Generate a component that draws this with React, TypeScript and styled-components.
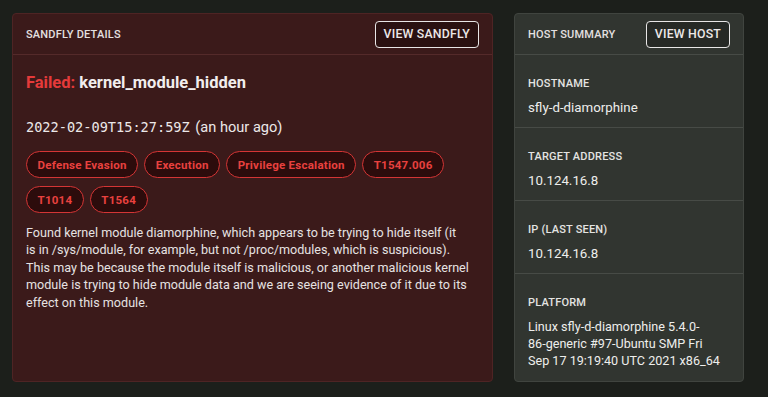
import React from "react";
import styled, { createGlobalStyle } from "styled-components";

const Global = createGlobalStyle`
  html, body { margin: 0; padding: 0; background: #1c1f1b; }
  body { font-family: Roboto, "Liberation Sans", sans-serif; color: #ece8e8; }
  * { box-sizing: border-box; }
`;

const Page = styled.div`
  display: flex;
  gap: 21px;
  padding: 13px 24px 0 12px;
  height: 397px;
`;

const Card = styled.section<{ $tone: "red" | "grey" }>`
  display: flex;
  flex-direction: column;
  height: 369px;
  border-radius: 4px;
  border: 1px solid ${(p) => (p.$tone === "red" ? "#4e2424" : "#40443f")};
  background: ${(p) => (p.$tone === "red" ? "#3b1a1a" : "#313530")};
  overflow: hidden;
`;

const LeftCard = styled(Card)`
  flex: 1;
`;

const RightCard = styled(Card)`
  width: 230px;
  flex: none;
`;

const Header = styled.header<{ $tone: "red" | "grey" }>`
  display: flex;
  align-items: center;
  justify-content: space-between;
  height: 41px;
  padding: 0 13px 0 13px;
  border-bottom: 1px solid ${(p) => (p.$tone === "red" ? "#542a2a" : "#474b46")};
  flex: none;
`;

const HeaderTitle = styled.h2`
  margin: 0;
  font-size: 11px;
  font-weight: 500;
  letter-spacing: 0.2px;
  color: #e4e0e0;
  text-transform: uppercase;
`;

const Button = styled.button<{ $tone: "red" | "grey" }>`
  height: 27px;
  padding: 0 8px;
  border: 1.5px solid #e8e6e6;
  border-radius: 4px;
  background: ${(p) => (p.$tone === "red" ? "#2a1111" : "#262925")};
  color: #ece8e8;
  font-family: Roboto, "Liberation Sans", sans-serif;
  font-size: 12.3px;
  font-weight: 500;
  letter-spacing: 0.2px;
  text-transform: uppercase;
  cursor: pointer;
`;

const Body = styled.div`
  display: flex;
  flex-direction: column;
  padding: 17px 9px 0 13px;
`;

const Title = styled.h1`
  margin: 0;
  font-size: 16.5px;
  line-height: 22px;
  font-weight: 700;
  color: #f2eeee;
`;

const Failed = styled.span`
  color: #e53a3a;
`;

const Timestamp = styled.div`
  margin-top: 23px;
  font-size: 14.6px;
  line-height: 20px;
  color: #ece8e8;
`;

const Mono = styled.span`
  font-family: "DejaVu Sans Mono", "Liberation Mono", monospace;
  font-size: 13.6px;
  margin-right: 2px;
`;

const Tags = styled.div`
  display: flex;
  flex-wrap: wrap;
  gap: 8px 6px;
  margin-top: 14px;
`;

const Tag = styled.span`
  display: inline-flex;
  align-items: center;
  height: 27px;
  padding: 0 10.5px;
  border: 1.6px solid #d43535;
  border-radius: 14px;
  background: #2c0c0c;
  color: #e8413f;
  font-size: 11.5px;
  font-weight: 700;
  letter-spacing: 0.25px;
`;

const Description = styled.p`
  margin: 11px 0 0 0;
  font-size: 12.6px;
  line-height: 17.4px;
  color: #e6e2e2;
`;

const Section = styled.div<{ $last?: boolean }>`
  padding: 22px 12px 0 13px;
  height: ${(p) => (p.$last ? "auto" : "73px")};
  border-bottom: ${(p) => (p.$last ? "none" : "1px solid #474b46")};
  flex: none;
`;

const Label = styled.div`
  font-size: 11px;
  line-height: 14px;
  font-weight: 500;
  letter-spacing: 0.2px;
  color: #e4e4e2;
  text-transform: uppercase;
`;

const Value = styled.div<{ $small?: boolean }>`
  margin-top: 8px;
  font-size: ${(p) => (p.$small ? "12.6px" : "13.3px")};
  line-height: 17px;
  color: #eeeeec;
`;

const NoWrap = styled.span`
  white-space: nowrap;
`;

const tags = [
  "Defense Evasion",
  "Execution",
  "Privilege Escalation",
  "T1547.006",
  "T1014",
  "T1564",
];

const descriptionLines = [
  "Found kernel module diamorphine, which appears to be trying to hide itself (it",
  "is in /sys/module, for example, but not /proc/modules, which is suspicious).",
  "This may be because the module itself is malicious, or another malicious kernel",
  "module is trying to hide module data and we are seeing evidence of it due to its",
  "effect on this module.",
];

const host: { label: string; value: React.ReactNode; small?: boolean }[] = [
  { label: "Hostname", value: "sfly-d-diamorphine" },
  { label: "Target Address", value: "10.124.16.8" },
  { label: "IP (Last Seen)", value: "10.124.16.8" },
  {
    label: "Platform",
    small: true,
    value: (
      <>
        Linux sfly-d-diamorphine 5.4.0-<NoWrap>86-generic</NoWrap> #97-Ubuntu SMP Fri{" "}
        <NoWrap>Sep 17 19:19:40 UTC 2021 x86_64</NoWrap>
      </>
    ),
  },
];

export default function App() {
  return (
    <>
      <Global />
      <Page>
        <LeftCard $tone="red">
          <Header $tone="red">
            <HeaderTitle>Sandfly Details</HeaderTitle>
            <Button $tone="red">View Sandfly</Button>
          </Header>
          <Body>
            <Title>
              <Failed>Failed:</Failed> kernel_module_hidden
            </Title>
            <Timestamp>
              <Mono>2022-02-09T15:27:59Z</Mono> (an hour ago)
            </Timestamp>
            <Tags>
              {tags.map((t) => (
                <Tag key={t}>{t}</Tag>
              ))}
            </Tags>
            <Description>
              {descriptionLines.map((l, i) => (
                <React.Fragment key={i}>
                  {l}
                  {i < descriptionLines.length - 1 && <br />}
                </React.Fragment>
              ))}
            </Description>
          </Body>
        </LeftCard>
        <RightCard $tone="grey">
          <Header $tone="grey">
            <HeaderTitle>Host Summary</HeaderTitle>
            <Button $tone="grey">View Host</Button>
          </Header>
          {host.map((h, i) => (
            <Section key={h.label} $last={i === host.length - 1}>
              <Label>{h.label}</Label>
              <Value $small={h.small}>{h.value}</Value>
            </Section>
          ))}
        </RightCard>
      </Page>
    </>
  );
}
